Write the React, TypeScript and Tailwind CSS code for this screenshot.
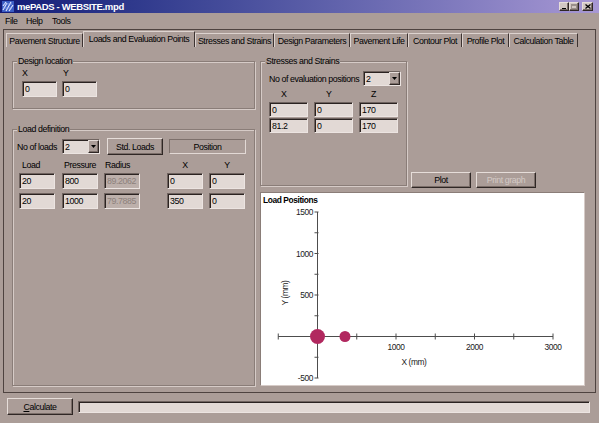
import React from 'react';

const BG = 'bg-[#ab9d98]';
const sunken =
  'border border-t-[#6f635f] border-l-[#6f635f] border-b-[#ece4e1] border-r-[#ece4e1] shadow-[inset_1px_1px_0_#2b2321]';
const raised =
  'border border-t-[#e6ddd9] border-l-[#e6ddd9] border-b-[#2f2725] border-r-[#2f2725] shadow-[inset_-1px_-1px_0_#7a6d68]';

function Field({
  value,
  className = 'w-[36px] h-[16px]',
  disabled = false,
}: {
  value: string;
  className?: string;
  disabled?: boolean;
}) {
  return (
    <div
      className={`${sunken} ${className} ${
        disabled ? 'bg-[#bdb0ab] text-[#8d817c]' : 'bg-[#e2d9d5] text-black'
      } pl-[2px] flex items-center overflow-hidden whitespace-nowrap`}
    >
      {value}
    </div>
  );
}

function Combo({ value }: { value: string }) {
  return (
    <div className={`${sunken} bg-[#e2d9d5] w-[38px] h-[15px] flex items-center justify-between`}>
      <span className="pl-[2px]">{value}</span>
      <span className={`${raised} ${BG} w-[11px] h-[13px] flex items-center justify-center`}>
        <svg width="5" height="3" viewBox="0 0 5 3">
          <path d="M0 0H5L2.5 3Z" fill="#000" />
        </svg>
      </span>
    </div>
  );
}

function Button({
  children,
  className = '',
  disabled = false,
}: {
  children: React.ReactNode;
  className?: string;
  disabled?: boolean;
}) {
  return (
    <button
      type="button"
      className={`${raised} ${BG} ${className} flex items-center justify-center ${
        disabled ? 'text-[#d3c9c5]' : 'text-black'
      }`}
    >
      {children}
    </button>
  );
}

function Group({
  title,
  className,
  children,
}: {
  title: string;
  className: string;
  children: React.ReactNode;
}) {
  return (
    <div className={`border border-[#8a7d78] shadow-[1px_1px_0_#d6cbc7,inset_1px_1px_0_#d6cbc7] ${className}`}>
      <div className={`-mt-[7px] ml-[4px] px-[1px] w-fit ${BG} leading-[12px]`}>{title}</div>
      {children}
    </div>
  );
}

function LoadChart() {
  const x = (v: number) => 56.5 + v * 0.0785;
  const y = (v: number) => 143.5 - v * 0.083;
  const yTicks = [-500, -250, 0, 250, 500, 750, 1000, 1250, 1500];
  const xTicks = [-500, 0, 500, 1000, 1500, 2000, 2500, 3000];
  const font = "'Liberation Sans', Arial, sans-serif";
  return (
    <svg width="323" height="192" viewBox="0 0 323 192" className="block">
      <text x="2" y="10" fontFamily={font} fontSize="8.4" fontWeight="bold" fill="#000">
        Load Positions
      </text>
      <g stroke="#4d4d4d" strokeWidth="1">
        <line x1={x(0)} y1={y(1500)} x2={x(0)} y2={y(-500)} />
        <line x1={x(-500)} y1={y(0)} x2={x(3000)} y2={y(0)} />
        {yTicks.map((v) => (
          <line key={v} x1={x(0) - 3} x2={x(0) + 1} y1={y(v)} y2={y(v)} />
        ))}
        {xTicks.map((v) => (
          <line key={v} x1={x(v)} x2={x(v)} y1={y(0) - 3} y2={y(0) + 3} />
        ))}
      </g>
      <g fontFamily={font} fontSize="8.4" fill="#222">
        {[1500, 1000, 500, -500].map((v) => (
          <text key={v} x="52" y={y(v) + 3} textAnchor="end">
            {v}
          </text>
        ))}
        {[1000, 2000, 3000].map((v) => (
          <text key={v} x={x(v)} y="157" textAnchor="middle">
            {v}
          </text>
        ))}
        <text x="153" y="172" textAnchor="middle">
          X (mm)
        </text>
        <text x="24" y="103" textAnchor="middle" transform="rotate(-90 24 100)">
          Y (mm)
        </text>
      </g>
      <circle cx={x(0)} cy={y(0)} r="7.5" fill="#b1285f" />
      <circle cx={x(350)} cy={y(0)} r="5.5" fill="#b1285f" />
    </svg>
  );
}

const tabs = [
  { label: 'Pavement Structure', w: 'w-[77px]' },
  { label: 'Loads and Evaluation Points', w: 'w-[112px]' },
  { label: 'Stresses and Strains', w: 'w-[79px]' },
  { label: 'Design Parameters', w: 'w-[76px]' },
  { label: 'Pavement Life', w: 'w-[58px]' },
  { label: 'Contour Plot', w: 'w-[54px]' },
  { label: 'Profile Plot', w: 'w-[47px]' },
  { label: 'Calculation Table', w: 'w-[69px]' },
];

export default function App() {
  return (
    <div
      className={`w-[599px] h-[423px] ${BG} flex flex-col overflow-hidden text-[8.8px] tracking-[-0.4px] leading-[12px] text-black font-['Liberation_Sans',Arial,sans-serif]`}
    >
      {/* Title bar */}
      <div className="h-[13px] flex items-center bg-linear-to-r from-[#131a77] to-[#a898d4] pl-[2px] pr-[6px]">
        <svg width="12" height="11" viewBox="0 0 12 11" className="shrink-0">
          <rect width="12" height="11" fill="#3a5cc4" />
          <path d="M1 9L5 2M4 10L9 1M7 10L11 4M1 5L4 1" stroke="#dfe6ff" strokeWidth="1.2" />
          <path d="M2 3h8M1 7h9" stroke="#8fa6f0" strokeWidth="0.8" />
        </svg>
        <span className="ml-[3px] text-white font-bold text-[9.5px] tracking-[-0.35px]">mePADS - WEBSITE.mpd</span>
        <div className="ml-auto flex items-center">
          <div className={`${raised} bg-[#d2c7c3] w-[10px] h-[9px] flex items-end justify-center pb-[1px]`}>
            <div className="w-[4px] h-[1.5px] bg-black" />
          </div>
          <div className={`${raised} bg-[#d2c7c3] w-[10px] h-[9px] flex items-center justify-center`}>
            <div className="w-[6px] h-[5px] border border-t-2 border-[#9a8f8b]" />
          </div>
          <div className={`${raised} bg-[#d2c7c3] w-[11px] h-[9px] ml-[3px] flex items-center justify-center`}>
            <svg width="6" height="5" viewBox="0 0 6 5">
              <path d="M0.5 0.5L5.5 4.5M5.5 0.5L0.5 4.5" stroke="#000" strokeWidth="1.3" />
            </svg>
          </div>
        </div>
      </div>

      {/* Menu bar */}
      <div className="h-[16px] flex items-center pl-[5px]">
        <span className="w-[21px]">File</span>
        <span className="w-[26px]">Help</span>
        <span>Tools</span>
      </div>

      {/* Tab control */}
      <div className="mx-[3px] h-[364px] border border-[#4e4340] flex flex-col">
        <div className="h-[17px] flex items-end pl-[2px]">
          {tabs.map((t, i) => (
            <div
              key={t.label}
              className={`${t.w} shrink-0 flex items-center justify-center whitespace-nowrap border-l border-t border-r border-l-[#ddd3cf] border-t-[#ddd3cf] border-r-[#3d3331] ${
                i === 1 ? 'h-[16px] pb-[1px]' : 'h-[14px]'
              }`}
            >
              {t.label}
            </div>
          ))}
        </div>

        <div className="h-[345px] flex pl-[8px] pt-[14px]">
          {/* Left column */}
          <div className="w-[243px] flex flex-col">
            <Group title="Design location" className="h-[48px]">
              <div className="flex pl-[9px]">
                <div className="flex flex-col">
                  <span className="leading-[12px]">X</span>
                  <Field value="0" className="w-[35px] h-[16px] mt-[2px]" />
                </div>
                <div className="flex flex-col ml-[5px]">
                  <span className="leading-[12px] pl-[1px]">Y</span>
                  <Field value="0" className="w-[35px] h-[16px] mt-[2px]" />
                </div>
              </div>
            </Group>

            <Group title="Load definition" className="h-[257px] mt-[20px]">
              <div className="flex items-center h-[17px] mt-[3px] pl-[4px]">
                <span className="w-[45px] whitespace-nowrap">No of loads</span>
                <Combo value="2" />
                <Button className="w-[56px] h-[17px] ml-[7px]">Std. Loads</Button>
                <div className="w-[77px] h-[15px] ml-[6px] border border-t-[#7d706b] border-l-[#7d706b] border-b-[#e2d9d5] border-r-[#e2d9d5] flex items-center justify-center">
                  Position
                </div>
              </div>
              <div className="flex pl-[6px] mt-[4px]">
                <div className="w-[36px] flex flex-col">
                  <span className="pl-[3px]">Load</span>
                  <Field value="20" className="w-[36px] h-[16px] mt-[2px]" />
                  <Field value="20" className="w-[36px] h-[16px] mt-[4px]" />
                </div>
                <div className="w-[36px] ml-[7px] flex flex-col">
                  <span className="pl-[2px] whitespace-nowrap">Pressure</span>
                  <Field value="800" className="w-[36px] h-[16px] mt-[2px]" />
                  <Field value="1000" className="w-[36px] h-[16px] mt-[4px]" />
                </div>
                <div className="w-[36px] ml-[6px] flex flex-col">
                  <span className="pl-[1px]">Radius</span>
                  <Field value="89.2062" disabled className="w-[36px] h-[16px] mt-[2px]" />
                  <Field value="79.7885" disabled className="w-[36px] h-[16px] mt-[4px]" />
                </div>
                <div className="w-[36px] ml-[27px] flex flex-col">
                  <span className="text-center">X</span>
                  <Field value="0" className="w-[36px] h-[16px] mt-[2px]" />
                  <Field value="350" className="w-[36px] h-[16px] mt-[4px]" />
                </div>
                <div className="w-[36px] ml-[6px] flex flex-col">
                  <span className="text-center">Y</span>
                  <Field value="0" className="w-[36px] h-[16px] mt-[2px]" />
                  <Field value="0" className="w-[36px] h-[16px] mt-[4px]" />
                </div>
              </div>
            </Group>
          </div>

          {/* Right column */}
          <div className="ml-[5px] flex flex-col">
            <div className="flex items-start">
              <Group title="Stresses and Strains" className="w-[147px] h-[125px]">
                <div className="flex items-center mt-[4px] pl-[8px]">
                  <span className="w-[94px] whitespace-nowrap">No of evaluation positions</span>
                  <Combo value="2" />
                </div>
                <div className="flex pl-[8px] mt-[2px]">
                  {[
                    ['X', '0', '81.2'],
                    ['Y', '0', '0'],
                    ['Z', '170', '170'],
                  ].map(([h, a, b], i) => (
                    <div key={h} className={`w-[39px] flex flex-col ${i > 0 ? 'ml-[6px]' : ''}`}>
                      <span className="pl-[12px]">{h}</span>
                      <Field value={a} className="w-[39px] h-[15px] mt-[2px]" />
                      <Field value={b} className="w-[39px] h-[15px] mt-[1px]" />
                    </div>
                  ))}
                </div>
              </Group>
              <div className="flex mt-[111px] ml-[4px] gap-[5px]">
                <Button className="w-[60px] h-[16px]">Plot</Button>
                <Button disabled className="w-[60px] h-[16px]">
                  Print graph
                </Button>
              </div>
            </div>
            <div className="mt-[4px] w-[325px] h-[194px] bg-white border border-t-[#8a7d78] border-l-[#8a7d78] border-b-[#d6cbc7] border-r-[#d6cbc7]">
              <LoadChart />
            </div>
          </div>
        </div>
      </div>

      {/* Bottom bar */}
      <div className="flex items-start pl-[7px] pt-[5px]">
        <Button className="w-[66px] h-[17px]">
          <span>
            <span className="underline">C</span>alculate
          </span>
        </Button>
        <div className={`${sunken} bg-[#e2d9d5] w-[512px] h-[12px] ml-[5px] mt-[3px]`} />
      </div>
    </div>
  );
}
